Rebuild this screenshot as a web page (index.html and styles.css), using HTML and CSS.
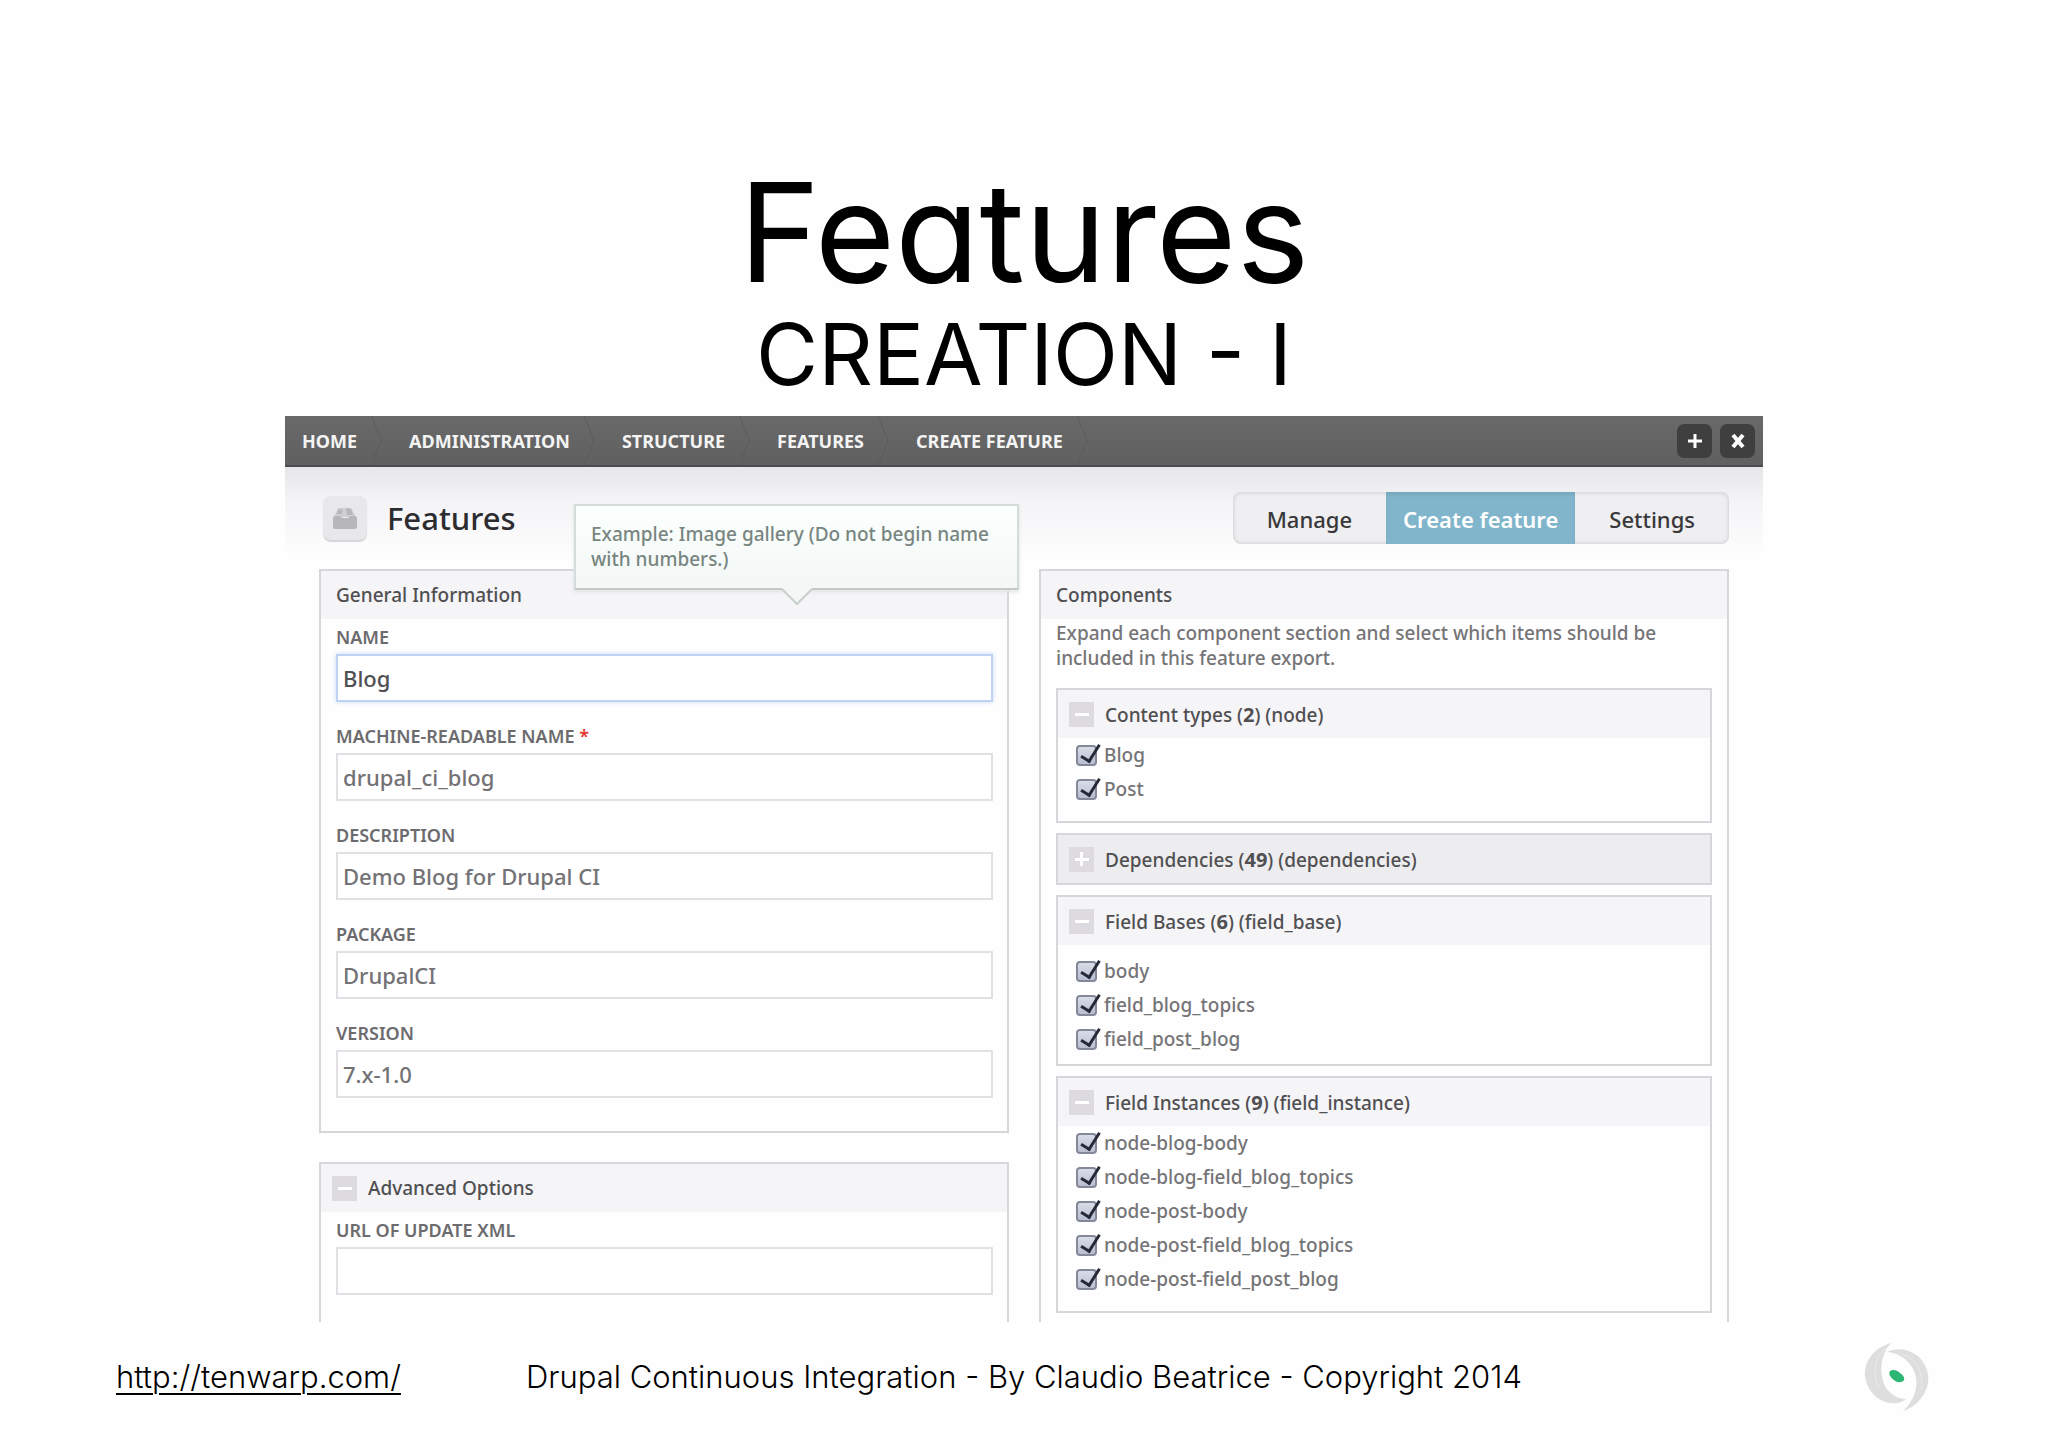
FILE: index.html
```
<!DOCTYPE html>
<html lang="en">
<head>
    <meta charset="UTF-8">
    <meta name="viewport" content="width=device-width, initial-scale=1.0">
    <title>Features - Creation I</title>
    <link rel="stylesheet" href="styles.css">
</head>
<body>
    <header class="slide-title">
        <h1>Features</h1>
        <p>CREATION - I</p>
    </header>

    <main class="overlay">
        <div class="topbar">
            <nav class="breadcrumb">
                <a href="#">HOME</a>
                <a href="#">ADMINISTRATION</a>
                <a href="#">STRUCTURE</a>
                <a href="#">FEATURES</a>
                <a href="#">CREATE FEATURE</a>
            </nav>
            <button class="bar-btn" type="button" aria-label="Add shortcut">
                <svg width="16" height="16" viewBox="0 0 16 16"><path d="M8 1v14M1 8h14" stroke="#fff" stroke-width="3"/></svg>
            </button>
            <button class="bar-btn" type="button" aria-label="Close">
                <svg width="16" height="16" viewBox="0 0 16 16"><path d="M3 2l10 12M13 2L3 14" stroke="#fff" stroke-width="4"/></svg>
            </button>
        </div>

        <div class="page-head">
            <span class="page-icon">
                <svg width="26" height="26" viewBox="0 0 26 26">
                    <path d="M6 3h13l5 9H2z" fill="#cfced1"/>
                    <path d="M1 13c0-1 1-2 2-2h5c1 3 9 3 10 0h5c1 0 2 1 2 2v9a2 2 0 0 1-2 2H3a2 2 0 0 1-2-2z" fill="#b7b6b9"/>
                    <path d="M6 5l4-1v5H5zM14 3l5 1 2 6h-6z" fill="#b7b6b9"/>
                </svg>
            </span>
            <h2>Features</h2>
            <nav class="tabs">
                <a href="#">Manage</a>
                <a href="#" class="active">Create feature</a>
                <a href="#">Settings</a>
            </nav>
        </div>

        <form class="columns">
            <div class="column">
                <section class="panel general">
                    <h3 class="legend">General Information</h3>
                    <div class="tooltip" role="tooltip">
                        Example: Image gallery (Do not begin name with numbers.)
                        <svg class="tooltip-arrow" width="30" height="18" viewBox="0 0 30 18">
                            <path d="M0 0H30V1L15 16L0 1z" fill="#f3f8f6"/>
                            <path d="M0 1L15 16L30 1" fill="none" stroke="#c9cfcd" stroke-width="2"/>
                        </svg>
                    </div>
                    <div class="fields">
                        <label for="name">NAME</label>
                        <input type="text" id="name" class="focused" value="Blog">
                        <label for="machine-name">MACHINE-READABLE NAME <span class="required">*</span></label>
                        <input type="text" id="machine-name" value="drupal_ci_blog">
                        <label for="description">DESCRIPTION</label>
                        <input type="text" id="description" value="Demo Blog for Drupal CI">
                        <label for="package">PACKAGE</label>
                        <input type="text" id="package" value="DrupalCI">
                        <label for="version">VERSION</label>
                        <input type="text" id="version" value="7.x-1.0">
                    </div>
                </section>

                <section class="panel">
                    <h3 class="legend"><button type="button" class="toggle minus" aria-label="Collapse"></button>Advanced Options</h3>
                    <div class="fields">
                        <label for="update-url">URL OF UPDATE XML</label>
                        <input type="text" id="update-url">
                        <label for="path">PATH TO GENERATE FEATURE MODULE</label>
                        <input type="text" id="path">
                    </div>
                </section>
            </div>

            <div class="column">
                <section class="panel components">
                    <h3 class="legend">Components</h3>
                    <p class="help">Expand each component section and select which items should be included in this feature export.</p>

                    <div class="group">
                        <h4 class="legend"><button type="button" class="toggle minus" aria-label="Collapse"></button><span>Content types (<b>2</b>) (node)</span></h4>
                        <div class="items">
                            <label><input type="checkbox" checked>Blog</label>
                            <label><input type="checkbox" checked>Post</label>
                        </div>
                    </div>

                    <div class="group collapsed">
                        <h4 class="legend"><button type="button" class="toggle plus" aria-label="Expand"></button><span>Dependencies (<b>49</b>) (dependencies)</span></h4>
                    </div>

                    <div class="group">
                        <h4 class="legend"><button type="button" class="toggle minus" aria-label="Collapse"></button><span>Field Bases (<b>6</b>) (field_base)</span></h4>
                        <div class="items spaced">
                            <label><input type="checkbox" checked>body</label>
                            <label><input type="checkbox" checked>field_blog_topics</label>
                            <label><input type="checkbox" checked>field_post_blog</label>
                        </div>
                    </div>

                    <div class="group">
                        <h4 class="legend"><button type="button" class="toggle minus" aria-label="Collapse"></button><span>Field Instances (<b>9</b>) (field_instance)</span></h4>
                        <div class="items">
                            <label><input type="checkbox" checked>node-blog-body</label>
                            <label><input type="checkbox" checked>node-blog-field_blog_topics</label>
                            <label><input type="checkbox" checked>node-post-body</label>
                            <label><input type="checkbox" checked>node-post-field_blog_topics</label>
                            <label><input type="checkbox" checked>node-post-field_post_blog</label>
                        </div>
                    </div>
                </section>
            </div>
        </form>
    </main>

    <footer class="slide-footer">
        <a href="http://tenwarp.com/">http://tenwarp.com/</a>
        <p>Drupal Continuous Integration - By Claudio Beatrice - Copyright 2014</p>
        <svg class="logo" width="68" height="70" viewBox="0 0 68 70">
            <path d="M27 1C9 6 0 20 1 34c2 16 14 26 26 27 8 1 13-2 15-4-9 0-18-6-22-15C15 28 17 12 27 1z" fill="#dededf"/>
            <path d="M23 10c10-5 24-3 33 6 9 10 11 23 5 34-5 10-13 16-22 19 10-9 15-22 13-34C49 21 37 11 23 10z" fill="#dededf"/>
            <path d="M22 6C10 17 8 32 15 46" fill="none" stroke="#ebebec" stroke-width="1"/>
            <path d="M38 12c16 6 22 21 19 36" fill="none" stroke="#ebebec" stroke-width="1"/>
            <path d="M26 29c3-2 7-1 10 2 3 2 5 5 4 7-2 3-7 3-10 0-3-2-6-6-4-9z" fill="#2bb673"/>
        </svg>
    </footer>
</body>
</html>
```
FILE: styles.css
```
* {
    box-sizing: border-box;
}
body {
    margin: 0;
    height: 100vh;
    display: flex;
    flex-direction: column;
    background: #fefefe;
    color: #000;
    font-family: "Noto Sans", sans-serif;
}
h1, h2, h3, h4, p {
    margin: 0;
    font-weight: inherit;
}
a {
    color: inherit;
    text-decoration: none;
}

/* slide title */
.slide-title {
    flex: none;
    height: 416px;
    padding-top: 152px;
    text-align: center;
    font-family: Inter, sans-serif;
    font-feature-settings: "cv11";
}
.slide-title h1 {
    font-size: 138px;
    line-height: 160px;
}
.slide-title p {
    font-size: 85px;
    line-height: 86px;
}

/* admin overlay */
.overlay {
    flex: 1;
    min-height: 0;
    overflow: hidden;
    margin: 0 285px;
    background: linear-gradient(to bottom, #e6e5e8 50px, #f4f3f6 85px, #fefefe 140px);
    font-weight: 500;
}
.topbar {
    display: flex;
    align-items: center;
    gap: 8px;
    height: 51px;
    padding: 0 8px 0 17px;
    background: linear-gradient(to bottom, #696969, #606060);
    border-bottom: 2px solid #4c4c50;
}
.breadcrumb {
    flex: 1;
    display: flex;
    gap: 52px;
    font-size: 18px;
    font-weight: 700;
    color: #f4f4f4;
}
.breadcrumb a {
    position: relative;
    line-height: 50px;
}
.breadcrumb a::after {
    content: "";
    position: absolute;
    top: 7px;
    right: -32px;
    width: 34px;
    height: 34px;
    border-top: 1px solid #575757;
    border-right: 1px solid #575757;
    transform: scaleX(0.4) rotate(45deg);
}
.bar-btn {
    display: flex;
    align-items: center;
    justify-content: center;
    width: 35px;
    height: 34px;
    padding: 0;
    border: none;
    border-radius: 7px;
    background: #3f3f3f;
}
.page-head {
    display: flex;
    align-items: center;
    height: 102px;
    padding: 0 34px 0 38px;
}
.page-icon {
    display: flex;
    align-items: center;
    justify-content: center;
    width: 44px;
    height: 44px;
    border-radius: 8px;
    background: #e8e7ea;
    box-shadow: 0 2px 1px #d6d5d8;
}
.page-head h2 {
    flex: 1;
    margin-left: 20px;
    font-size: 31px;
    color: #2c2c30;
}
.tabs {
    display: flex;
    height: 52px;
    border-radius: 8px;
    overflow: hidden;
    background: #efeef0;
    box-shadow: inset 0 0 4px #c4c3c6;
    font-size: 22px;
    line-height: 54px;
    color: #38383a;
}
.tabs a {
    padding: 0 34px;
}
.tabs .active {
    padding: 0 17px;
    background: #80b5cb;
    box-shadow: inset 0 3px 3px #78a9bd;
    color: #fff;
    font-weight: 600;
}

/* two columns of panels */
.columns {
    display: grid;
    grid-template-columns: 1fr 1fr;
    gap: 30px;
    padding: 0 34px;
}
.panel {
    margin-bottom: 29px;
    border: 2px solid #d8d6da;
}
.general {
    position: relative;
    padding-bottom: 13px;
}
.legend {
    display: flex;
    align-items: center;
    gap: 11px;
    height: 48px;
    padding-left: 15px;
    background: #f5f4f7;
    font-size: 19px;
    color: #504f52;
}
.legend b {
    font-size: 20px;
}
.toggle {
    width: 25px;
    height: 25px;
    margin-left: -4px;
    padding: 0;
    border: none;
    background: linear-gradient(#fff, #fff) center / 14px 3px no-repeat #dddbdf;
}
.toggle.plus {
    background: linear-gradient(#fff, #fff) center / 14px 3px no-repeat, linear-gradient(#fff, #fff) center / 3px 14px no-repeat #dddbdf;
}
.fields {
    display: flex;
    flex-direction: column;
    padding: 4px 14px 0 15px;
}
.fields label {
    margin-bottom: 3px;
    font-size: 18px;
    font-weight: 600;
    line-height: 28px;
    color: #6c6b6e;
}
.required {
    color: #e8392f;
}
.fields input {
    height: 48px;
    margin-bottom: 20px;
    padding: 0 5px;
    border: 2px solid #e2e0e4;
    outline: none;
    background: #fff;
    font-family: inherit;
    font-size: 22px;
    font-weight: 500;
    color: #737275;
}
.fields input.focused {
    border-color: #bfd2f4;
    box-shadow: 0 0 5px #c9d9f6;
    color: #504f52;
}
.tooltip {
    position: absolute;
    z-index: 1;
    left: 253px;
    top: -67px;
    width: 445px;
    padding: 16px 15px;
    border: 2px solid #d5dbd9;
    border-bottom-color: #c3c9c7;
    background: linear-gradient(to bottom, #fbfffe, #f3f8f6);
    box-shadow: 0 2px 4px #e0e4e2;
    font-size: 19px;
    line-height: 25px;
    color: #788580;
}
.tooltip-arrow {
    position: absolute;
    left: 206px;
    top: 100%;
}

/* component list */
.components {
    padding-bottom: 40px;
}
.help {
    padding: 2px 14px 17px 15px;
    font-size: 19px;
    line-height: 25px;
    color: #757477;
}
.group {
    margin: 0 15px 10px;
    border: 2px solid #d8d6da;
}
.collapsed .legend {
    background: #edecee;
}
.items {
    display: flex;
    flex-direction: column;
    padding: 0 18px 15px;
}
.items.spaced {
    padding: 9px 18px 8px;
}
.items label {
    display: flex;
    align-items: center;
    gap: 7px;
    height: 34px;
    font-size: 19px;
    color: #757477;
}
.items input {
    position: relative;
    appearance: none;
    width: 21px;
    height: 21px;
    margin: 0;
    border: 2px solid #85889a;
    border-radius: 4px;
    background: linear-gradient(to bottom, #d9dde8, #b9bfcf);
}
/* tick runs past the corner of the box */
.items input::after {
    content: "";
    position: absolute;
    left: 7px;
    top: -6px;
    width: 8px;
    height: 18px;
    border-right: 3px solid #262a38;
    border-bottom: 3px solid #262a38;
    transform: rotate(32deg);
}

/* slide footer */
.slide-footer {
    flex: none;
    display: grid;
    grid-template-columns: 1fr auto 1fr;
    align-items: center;
    height: 126px;
    padding: 0 116px 17px;
    font-family: Inter, sans-serif;
    font-size: 31px;
    font-weight: 300;
}
.slide-footer a {
    text-decoration: underline;
    text-underline-offset: 5px;
    text-decoration-thickness: 2px;
}
.logo {
    justify-self: end;
}
```
